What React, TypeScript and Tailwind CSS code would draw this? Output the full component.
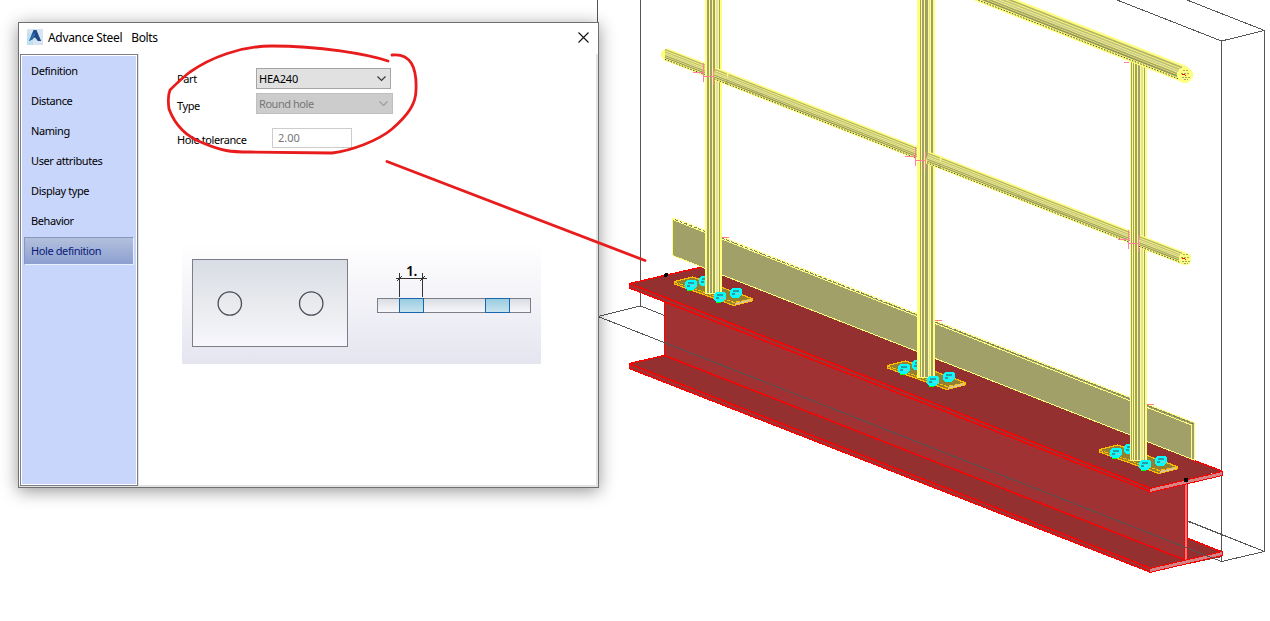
const MENU_ITEMS = [
  'Definition',
  'Distance',
  'Naming',
  'User attributes',
  'Display type',
  'Behavior',
  'Hole definition',
];

const YELLOW = '#ffff7f';
const OLIVE = '#a0a068';
const PALE = '#e0e0a8';
const RED = '#ff0000';

interface Point {
  x: number;
  y: number;
}

interface Strip {
  at: number;
  w: number;
  color: string;
}

// Shading of each post: offset from its left edge, width, colour
const LEFT_POST: Strip[] = [
  { at: 2, w: 2, color: OLIVE },
  { at: 5, w: 2, color: OLIVE },
  { at: 8, w: 2, color: OLIVE },
  { at: 11, w: 2, color: PALE },
  { at: 14, w: 1, color: OLIVE },
];
const MIDDLE_POST: Strip[] = [
  { at: 3, w: 1, color: OLIVE },
  { at: 5, w: 2, color: OLIVE },
  { at: 8, w: 3, color: OLIVE },
  { at: 12, w: 1, color: PALE },
  { at: 14, w: 2, color: OLIVE },
];
const RIGHT_POST: Strip[] = [
  { at: 1, w: 1, color: OLIVE },
  { at: 3, w: 1, color: OLIVE },
  { at: 5, w: 2, color: OLIVE },
  { at: 8, w: 2, color: OLIVE },
  { at: 11, w: 2, color: PALE },
  { at: 14, w: 1, color: OLIVE },
];

function Post({ x, top, bottom, width, strips }: { x: number; top: number; bottom: number; width: number; strips: Strip[] }) {
  return (
    <g>
      <rect x={x} y={top} width={width} height={bottom - top} fill={YELLOW} />
      {strips.map((s) => (
        <rect key={s.at} x={x + s.at} y={top} width={s.w} height={bottom - top - 1} fill={s.color} />
      ))}
    </g>
  );
}

// Inclined round tube between two points
function Rail({ from, to, size }: { from: Point; to: Point; size: number }) {
  const strips = [
    { at: -0.33, color: '#b4b46c' },
    { at: -0.17, color: '#c0c07c' },
    { at: -0.02, color: '#cccc90' },
    { at: 0.13, color: '#a8a868' },
    { at: 0.27, color: '#94945c' },
  ];
  return (
    <g shapeRendering="auto">
      <line x1={from.x} y1={from.y} x2={to.x} y2={to.y} stroke={YELLOW} strokeWidth={size - 0.5} />
      {strips.map((s) => (
        <line
          key={s.at}
          x1={from.x}
          y1={from.y + s.at * size}
          x2={to.x}
          y2={to.y + s.at * size}
          stroke={s.color}
          strokeWidth={size / 10}
        />
      ))}
      <line
        x1={from.x}
        y1={from.y + 0.41 * size}
        x2={to.x}
        y2={to.y + 0.41 * size}
        stroke="#484828"
        strokeWidth={1}
        strokeDasharray="1.5 1.5"
      />
    </g>
  );
}

function RailEnd({ x, y, r }: { x: number; y: number; r: number }) {
  return (
    <g>
      <circle cx={x} cy={y} r={r} fill={YELLOW} />
      <path
        d={`M${x - 2} ${y - 4.5}h5M${x - 4} ${y - 1.5}h9M${x - 3} ${y + 2.5}h8M${x - 1} ${y + 4.5}h4`}
        stroke="#a4a468"
        strokeDasharray="2 1"
      />
      <path d={`M${x - 3} ${y - 0.5}h3M${x} ${y + 0.5}h1`} fill="none" stroke={RED} />
    </g>
  );
}

function Bolt({ x, y, nut = false }: { x: number; y: number; nut?: boolean }) {
  return (
    <g transform={`translate(${x} ${y})`}>
      {nut && <path d="M-4 5h5" stroke="#00ff00" strokeWidth={2} />}
      <path d="M-6 -3l3 -2h7l2 1v6l-2 1v1l-2 1h-6l-2 -2v-1z" fill="#00ffff" />
      <path d="M-3 -2.5h6M-4 0.5h3" stroke="#289ca4" strokeWidth={2} />
      <path d="M0 1h4" stroke="#68d8d8" strokeWidth={2} />
    </g>
  );
}

// Base plate and the one bolt hidden partly behind the post
function BasePlate({ x, y }: { x: number; y: number }) {
  return (
    <g transform={`translate(${x} ${y})`}>
      <path
        d="M0.5 6.5L19 2L78 23.5V26L60 30.5L0.5 9z"
        fill="#948030"
        stroke="#ffbf00"
        strokeWidth={1.2}
      />
      <path d="M0.5 7L60 27.5L78 24" fill="none" stroke="#ffbf00" strokeDasharray="4 1" />
      <path d="M61 29L77 25" stroke="#dcc48c" strokeWidth={2} />
      <Bolt x={31} y={6} />
    </g>
  );
}

function PlateBolts({ x, y }: { x: number; y: number }) {
  return (
    <g transform={`translate(${x} ${y})`}>
      <Bolt x={17} y={10} nut />
      <Bolt x={62} y={18} />
      <Bolt x={46} y={22} nut />
    </g>
  );
}

// Pink connection marks where the middle rail meets a post
function JointMark({ x, y }: { x: number; y: number }) {
  return (
    <path
      d={`M${x - 10} ${y - 3.5}h10M${x + 0.5} ${y - 13}v19M${x} ${y + 0.5}h10M${x + 10.5} ${y - 8}v17`}
      fill="none"
      stroke="#ff7f9f"
    />
  );
}

function ModelView() {
  return (
    <svg
      className="absolute inset-0"
      width={1270}
      height={621}
      viewBox="0 0 1270 621"
      shapeRendering="crispEdges"
    >
      {/* back edges of the bounding box */}
      <path
        d="M597.5 0V24M640.5 0V306L598 316.5M640.5 306L1264.5 551.5M1117 0L1221.5 41L1264.5 30.5M1187 0L1264.5 30.5V551.5L1221.5 561.5V41"
        fill="none"
        stroke="#555"
      />

      {/* beam */}
      <path d="M1187 538L1222 551V557L1150 572L629 369V363L664 355L1187 560z" fill="#943030" />
      <path d="M664 300L1187 484V560L1150 570L664 356z" fill="#a03234" />
      <path d="M629 363L664 355L1187 560L1150 567z" fill="#943030" />
      <path d="M629 363L1150 567V572L629 368z" fill="#a03234" />
      <path d="M629 283L702 267L1222 471L1150 488z" fill="#943030" />
      <path d="M629 283L1150 489V492L629 288z" fill="#a03234" />
      <path
        d="M702 267L629.5 283.5V288L1150 491.5M629.5 283.5L1150 488M664.5 301V355.5L629.5 363.5V368.5L1150 572M629.5 364L1150 568M664.5 355.5L1185 560M1187 538L1222 552M1190 459L1222 471"
        fill="none"
        stroke={RED}
        strokeWidth={1.4}
      />
      <path d="M1184.5 483h3v78h-3z" fill="#d48484" stroke={RED} />
      <path d="M1149.5 488.5L1222.5 471.500V475.500L1149.500 492.500z" fill="#d48484" stroke={RED} />
      <path d="M1149.5 568.5L1222.5 551.500V555.500L1149.500 572.500z" fill="#d48484" stroke={RED} />
      <path d="M598 316.5L1221.5 561.5" stroke="#555" />
      <path d="M1188 521L1264.5 551.5" stroke="#555" />

      {/* toe board */}
      <path d="M672.5 219L1194 423V460L672.5 255z" fill={OLIVE} />
      <path
        d="M672.5 255V218.5H675L1194 422.5V460L672.5 255.5M672.5 219.500L1191.500 425V459"
        fill="none"
        stroke={YELLOW}
      />
      <path d="M675 219.5L1194 424" stroke="#80804c" strokeDasharray="3 2" />
      <path d="M722 237.5h7M935 320.5h7M1147 404.5h7" stroke="#ff7f7f" />

      <BasePlate x={674} y={275} />
      <BasePlate x={887} y={359} />
      <BasePlate x={1099} y={443} />

      {/* middle rail */}
      <circle cx={667} cy={54.5} r={6} fill={YELLOW} />
      <Rail from={{ x: 665, y: 54 }} to={{ x: 705, y: 69.5 }} size={13} />
      <Rail from={{ x: 713, y: 73 }} to={{ x: 917, y: 153 }} size={13} />
      <Rail from={{ x: 926, y: 157 }} to={{ x: 1130, y: 237 }} size={13} />
      <Post x={705} top={0} bottom={294} width={17} strips={LEFT_POST} />
      <Post x={917} top={0} bottom={378} width={18} strips={MIDDLE_POST} />
      <Post x={1130} top={62} bottom={461} width={17} strips={RIGHT_POST} />
      <Rail from={{ x: 714, y: 73.5 }} to={{ x: 727, y: 78.5 }} size={13} />
      <Rail from={{ x: 927, y: 157.5 }} to={{ x: 940, y: 162.5 }} size={13} />
      <Rail from={{ x: 1139, y: 241 }} to={{ x: 1184, y: 258.5 }} size={13} />
      <RailEnd x={1185} y={259} r={6.5} />

      {/* top rail */}
      <Rail from={{ x: 970, y: -10 }} to={{ x: 1184, y: 74 }} size={17} />
      <RailEnd x={1185} y={75} r={8} />

      <JointMark x={703} y={76} />
      <JointMark x={915} y={160} />
      <JointMark x={1128} y={243} />
      <path d="M1124 62.5h5" stroke="#ff7f9f" />

      <PlateBolts x={674} y={275} />
      <PlateBolts x={887} y={359} />
      <PlateBolts x={1099} y={443} />

      <circle cx={666} cy={275} r={2} fill="#000" />
      <rect x={1184} y={478} width={4} height={4} fill="#000" />
    </svg>
  );
}

function HolePreview() {
  return (
    <svg width={359} height={122} viewBox="182 242 359 122" className="block">
      <defs>
        <linearGradient id="backdrop" x1="0" y1="0" x2="0" y2="1">
          <stop offset="0" stopColor="#ffffff" />
          <stop offset="1" stopColor="#e5e5f0" />
        </linearGradient>
        <linearGradient id="plate" x1="0" y1="0" x2="0" y2="1">
          <stop offset="0" stopColor="#d8dce4" />
          <stop offset="0.5" stopColor="#e8eaed" />
          <stop offset="1" stopColor="#f7f7fd" />
        </linearGradient>
        <linearGradient id="hole" x1="0" y1="0" x2="0" y2="1">
          <stop offset="0" stopColor="#98cbe0" />
          <stop offset="1" stopColor="#c8e4ef" />
        </linearGradient>
      </defs>
      <rect x={182} y={242} width={359} height={122} fill="url(#backdrop)" />
      <rect x={192.5} y={259.5} width={155} height={87} fill="url(#plate)" stroke="#7b7e87" />
      <circle cx={229.8} cy={303.5} r={11.7} fill="none" stroke="#4c4c57" strokeWidth={1.3} />
      <circle cx={311.2} cy={303.5} r={11.7} fill="none" stroke="#4c4c57" strokeWidth={1.3} />
      <rect x={377.5} y={298.5} width={153} height={14} fill="url(#plate)" stroke="#7b7e87" />
      <rect x={399.5} y={298.5} width={24} height={14} fill="url(#hole)" stroke="#1766ae" />
      <rect x={485.5} y={298.5} width={24} height={14} fill="url(#hole)" stroke="#1766ae" />
      <path
        d="M399.5 273v24M422.5 273v24M396 278.5h31M397 281l5 -5M420 281l5 -5"
        fill="none"
        stroke="#333"
      />
      <text x={406} y={276} fontSize={14} fontWeight={600} fontFamily="Noto Sans, sans-serif">
        1.
      </text>
    </svg>
  );
}

function AppLogo() {
  return (
    <svg width={16} height={16} viewBox="0 0 16 16">
      <rect width={16} height={16} fill="#d9e4f2" />
      <rect y={4} width={6} height={12} fill="#bfe0f0" />
      <path d="M2 12L6.5 1h3L14 12h-3L8 5L6 10z" fill="#1b4f91" />
      <path d="M2 12L6.5 4L8 5L6 10z" fill="#2b6cab" />
      <path d="M6 9L8 8.5L11 12L14 12L9.5 3z" fill="#1d4987" />
    </svg>
  );
}

function SelectArrow({ color }: { color: string }) {
  return (
    <svg width={11} height={7} viewBox="0 0 11 7">
      <path d="M1.5 1.5l4 4l4 -4" fill="none" stroke={color} strokeWidth={1.1} />
    </svg>
  );
}

function Dialog() {
  return (
    <div className="absolute left-[18px] top-[22px] flex h-[466px] w-[581px] flex-col border border-[#707070] bg-white shadow-[0_3px_16px_rgba(0,0,0,0.42)]">
      <div className="flex h-[31px] shrink-0 items-center pb-[2px] pl-2 pr-[9px] text-[12px] tracking-[-0.33px]">
        <div className="-mt-px">
          <AppLogo />
        </div>
        <span className="ml-[5px] whitespace-pre">Advance Steel</span>
        <span className="ml-[9px]">Bolts</span>
        <svg className="ml-auto" width={11} height={11} viewBox="0 0 11 11">
          <path d="M0.5 0.5l10 10M10.5 0.5l-10 10" stroke="#111" strokeWidth={1.1} />
        </svg>
      </div>

      <div className="flex min-h-0 flex-1 border-b-2 border-r-2 border-[#e3e3e3] pl-px">
        <nav className="h-[432px] w-[118px] shrink-0 border border-[#7b7f88] p-px">
          <div className="h-full bg-[#c8d6fb] px-[2px]">
            {MENU_ITEMS.map((item) => (
              <div
                key={item}
                className={
                  item === 'Hole definition'
                    ? 'mt-px flex h-7 items-center border border-b-[#e8eefc] border-l-[#8797bd] border-r-[#e8eefc] border-t-[#8797bd] bg-linear-to-b from-[#b3c0dc] to-[#8c9fd0] pb-[2px] pl-[6px] text-[#0a1a78]'
                    : 'flex h-[30px] items-center pb-[2px] pl-[7px]'
                }
              >
                {item}
              </div>
            ))}
          </div>
        </nav>

        <main className="flex flex-1 flex-col border-l border-[#e3e3e3] pl-[38px] pt-[14px]">
          <div className="flex h-[21px] items-center">
            <label className="w-[79px]">Part</label>
            <div className="flex h-[21px] w-[135px] items-center justify-between border border-[#a5a5a5] bg-[#e1e1e1] pl-[2px] pr-[3px] tracking-[-0.2px]">
              HEA240
              <SelectArrow color="#333" />
            </div>
          </div>
          <div className="mt-1 flex h-[21px] items-center">
            <label className="w-[79px] pt-1">Type</label>
            <div className="flex h-[21px] w-[137px] items-center justify-between border border-[#bfbfbf] bg-[#cccccc] pl-[2px] pr-[3px] tracking-[-0.45px] text-[#767676]">
              Round hole
              <SelectArrow color="#9c9c9c" />
            </div>
          </div>
          <div className="mt-[14px] flex h-5 items-center">
            <label className="w-[95px] pt-[2px]">Hole tolerance</label>
            <div className="flex h-5 w-[80px] items-center border border-[#cccccc] pb-px pl-[5px] tracking-normal text-[#767676]">
              2.00
            </div>
          </div>
          <div className="ml-[5px] mt-[94px]">
            <HolePreview />
          </div>
        </main>
      </div>
    </div>
  );
}

// Red pen strokes drawn over the dialog and the model
function Annotation() {
  return (
    <svg
      className="pointer-events-none absolute inset-0"
      width={1270}
      height={621}
      viewBox="0 0 1270 621"
    >
      <path
        d="M388 61C367 54 320 46 272 46C240 46 210 58 190 72C182 78 176 84 170 90C168 95 168 102 169 109C175 125 187 137 203 143C222 151 230 152 250 152L332 153C350 151 378 141 392 129C408 115 416 104 416 90C417 68 411 53 392 55"
        fill="none"
        stroke="#e81c1c"
        strokeWidth={2.8}
        strokeLinecap="round"
        strokeLinejoin="round"
      />
      <path d="M387 161.5L645 260.5" stroke="#e81c1c" strokeWidth={2.8} strokeLinecap="round" />
    </svg>
  );
}

export default function App() {
  return (
    <div className="relative h-[621px] w-[1270px] overflow-hidden bg-white font-['Noto_Sans',sans-serif] text-[11px] leading-none tracking-[-0.4px] text-black">
      <ModelView />
      <Dialog />
      <Annotation />
    </div>
  );
}
